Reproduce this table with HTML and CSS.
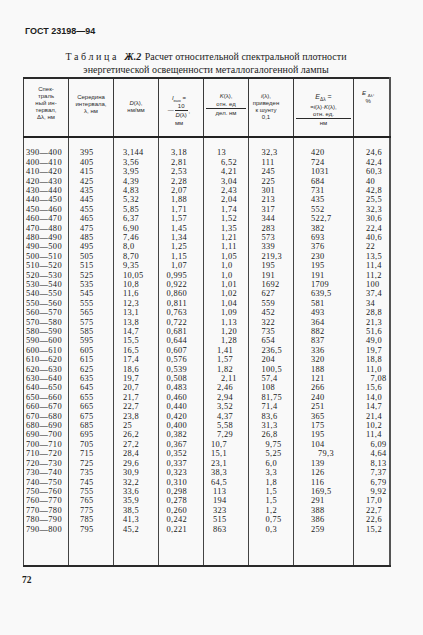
FILE: index.html
```html
<!DOCTYPE html>
<html lang="ru">
<head>
<meta charset="utf-8">
<title>ГОСТ 23198—94, таблица Ж.2</title>
<link rel="stylesheet" href="styles.css">
</head>
<body>
<div class="page">
  <div class="gost">ГОСТ 23198—94</div>
  <div class="title">
    <div><span class="sp">Таблица</span> <b class="num">Ж.2</b> Расчет относительной спектральной плотности</div>
    <div>энергетической освещенности металлогалогенной лампы</div>
  </div>
  <table class="tb">
    <colgroup>
      <col class="w45"><col class="w45"><col class="w45"><col class="w45"><col class="w45"><col class="w45"><col class="w60"><col class="w36">
    </colgroup>
    <thead>
      <tr>
        <th><div class="h h1"><div>Спек-</div><div>траль</div><div>ный ин-</div><div>тервал,</div><div>Δλ, нм</div></div></th>
        <th><div class="h h2"><div>Середина</div><div>интервала,</div><div>λ, нм</div></div></th>
        <th><div class="h h3"><div><i>D</i>(λ),</div><div>нм/мм</div></div></th>
        <th><div class="h h4">
          <div class="l8"><i>I</i><sub>вых</sub> =</div>
          <div class="fr-row"><span class="dash">—</span><span class="frac"><span class="fn">10</span><span class="fd"><i>D</i>(λ)</span></span><span class="cm">,</span></div>
          <div class="l8">мм</div>
        </div></th>
        <th><div class="h h5">
          <div class="l8"><i>K</i>(λ),</div>
          <div class="frac wide"><span class="fn">отн. ед</span><span class="fd">дел. нм</span></div>
        </div></th>
        <th><div class="h h6"><div><i>i</i>(λ),</div><div>приведен</div><div>к шунту</div><div>0,1</div></div></th>
        <th><div class="h h7">
          <div class="e1"><i>E</i><sub>Δλ</sub> =</div>
          <div class="l8">=<i>i</i>(λ)·<i>K</i>(λ),</div>
          <div class="frac wide"><span class="fn">отн. ед.</span><span class="fd">нм</span></div>
        </div></th>
        <th><div class="h h8"><div class="l8"><i>E</i> <sub>Δλ</sub>,</div><div class="l8">%</div></div></th>
      </tr>
    </thead>
    <tbody>
      <tr class="gap"><td></td><td></td><td></td><td></td><td></td><td></td><td></td><td></td></tr>
      <tr><td>390—400</td><td>395</td><td>3,144</td><td>3,18</td><td class="t5a">13</td><td>32,3</td><td>420</td><td>24,6</td></tr>
      <tr><td>400—410</td><td>405</td><td>3,56</td><td>2,81</td><td>6,52</td><td>111</td><td>724</td><td>42,4</td></tr>
      <tr><td>410—420</td><td>415</td><td>3,95</td><td>2,53</td><td>4,21</td><td>245</td><td>1031</td><td>60,3</td></tr>
      <tr><td>420—430</td><td>425</td><td>4,39</td><td>2,28</td><td>3,04</td><td>225</td><td>684</td><td>40</td></tr>
      <tr><td>430—440</td><td>435</td><td>4,83</td><td>2,07</td><td>2,43</td><td>301</td><td>731</td><td>42,8</td></tr>
      <tr><td>440—450</td><td>445</td><td>5,32</td><td>1,88</td><td>2,04</td><td>213</td><td>435</td><td>25,5</td></tr>
      <tr><td>450—460</td><td>455</td><td>5,85</td><td>1,71</td><td>1,74</td><td>317</td><td>552</td><td>32,3</td></tr>
      <tr><td>460—470</td><td>465</td><td>6,37</td><td>1,57</td><td>1,52</td><td>344</td><td>522,7</td><td>30,6</td></tr>
      <tr><td>470—480</td><td>475</td><td>6,90</td><td>1,45</td><td>1,35</td><td>283</td><td>382</td><td>22,4</td></tr>
      <tr><td>480—490</td><td>485</td><td>7,46</td><td>1,34</td><td>1,21</td><td>573</td><td>693</td><td>40,6</td></tr>
      <tr><td>490—500</td><td>495</td><td>8,0</td><td>1,25</td><td>1,11</td><td>339</td><td>376</td><td>22</td></tr>
      <tr><td>500—510</td><td>505</td><td>8,70</td><td>1,15</td><td>1,05</td><td>219,3</td><td>230</td><td>13,5</td></tr>
      <tr><td>510—520</td><td>515</td><td>9,35</td><td>1,07</td><td>1,0</td><td>195</td><td>195</td><td>11,4</td></tr>
      <tr><td>520—530</td><td>525</td><td>10,05</td><td>0,995</td><td>1,0</td><td>191</td><td>191</td><td>11,2</td></tr>
      <tr><td>530—540</td><td>535</td><td>10,8</td><td>0,922</td><td>1,01</td><td>1692</td><td>1709</td><td>100</td></tr>
      <tr><td>540—550</td><td>545</td><td>11,6</td><td>0,860</td><td>1,02</td><td>627</td><td>639,5</td><td>37,4</td></tr>
      <tr><td>550—560</td><td>555</td><td>12,3</td><td>0,811</td><td>1,04</td><td>559</td><td>581</td><td>34</td></tr>
      <tr><td>560—570</td><td>565</td><td>13,1</td><td>0,763</td><td>1,09</td><td>452</td><td>493</td><td>28,8</td></tr>
      <tr><td>570—580</td><td>575</td><td>13,8</td><td>0,722</td><td>1,13</td><td>322</td><td>364</td><td>21,3</td></tr>
      <tr><td>580—590</td><td>585</td><td>14,7</td><td>0,681</td><td>1,20</td><td>735</td><td>882</td><td>51,6</td></tr>
      <tr><td>590—600</td><td>595</td><td>15,5</td><td>0,644</td><td>1,28</td><td>654</td><td>837</td><td>49,0</td></tr>
      <tr><td>600—610</td><td>605</td><td>16,5</td><td>0,607</td><td class="t5a">1,41</td><td>236,5</td><td>336</td><td>19,7</td></tr>
      <tr><td>610—620</td><td>615</td><td>17,4</td><td>0,576</td><td class="t5a">1,57</td><td>204</td><td>320</td><td>18,8</td></tr>
      <tr><td>620—630</td><td>625</td><td>18,6</td><td>0,539</td><td class="t5a">1,82</td><td>100,5</td><td>188</td><td>11,0</td></tr>
      <tr><td>630—640</td><td>635</td><td>19,7</td><td>0,508</td><td>2,11</td><td>57,4</td><td>121</td><td class="t8r">7,08</td></tr>
      <tr><td>640—650</td><td>645</td><td>20,7</td><td>0,483</td><td class="t5a">2,46</td><td>108</td><td>266</td><td>15,6</td></tr>
      <tr><td>650—660</td><td>655</td><td>21,7</td><td>0,460</td><td class="t5a">2,94</td><td>81,75</td><td>240</td><td>14,0</td></tr>
      <tr><td>660—670</td><td>665</td><td>22,7</td><td>0,440</td><td class="t5a">3,52</td><td>71,4</td><td>251</td><td>14,7</td></tr>
      <tr><td>670—680</td><td>675</td><td>23,8</td><td>0,420</td><td class="t5a">4,37</td><td>83,6</td><td>365</td><td>21,4</td></tr>
      <tr><td>680—690</td><td>685</td><td>25</td><td>0,400</td><td class="t5a">5,58</td><td>31,3</td><td>175</td><td>10,2</td></tr>
      <tr><td>690—700</td><td>695</td><td>26,2</td><td>0,382</td><td class="t5a">7,29</td><td>26,8</td><td>195</td><td>11,4</td></tr>
      <tr><td>700—710</td><td>705</td><td>27,2</td><td>0,367</td><td class="t5b">10,7</td><td class="t6a">9,75</td><td>104</td><td class="t8r">6,09</td></tr>
      <tr><td>710—720</td><td>715</td><td>28,4</td><td>0,352</td><td class="t5b">15,1</td><td class="t6a">5,25</td><td class="t7a">79,3</td><td class="t8r">4,64</td></tr>
      <tr><td>720—730</td><td>725</td><td>29,6</td><td>0,337</td><td class="t5b">23,1</td><td class="t6a">6,0</td><td>139</td><td class="t8r">8,13</td></tr>
      <tr><td>730—740</td><td>735</td><td>30,9</td><td>0,323</td><td class="t5b">38,3</td><td class="t6a">3,3</td><td>126</td><td class="t8r">7,37</td></tr>
      <tr><td>740—750</td><td>745</td><td>32,2</td><td>0,310</td><td class="t5b">64,5</td><td class="t6a">1,8</td><td>116</td><td class="t8r">6,79</td></tr>
      <tr><td>750—760</td><td>755</td><td>33,6</td><td>0,298</td><td class="t5c">113</td><td class="t6a">1,5</td><td>169,5</td><td class="t8r">9,92</td></tr>
      <tr><td>760—770</td><td>765</td><td>35,9</td><td>0,278</td><td class="t5c">194</td><td class="t6a">1,5</td><td>291</td><td>17,0</td></tr>
      <tr><td>770—780</td><td>775</td><td>38,5</td><td>0,260</td><td class="t5c">323</td><td class="t6a">1,2</td><td>388</td><td>22,7</td></tr>
      <tr><td>780—790</td><td>785</td><td>41,3</td><td>0,242</td><td class="t5c">515</td><td class="t6a">0,75</td><td>386</td><td>22,6</td></tr>
      <tr><td>790—800</td><td>795</td><td>45,2</td><td>0,221</td><td class="t5c">863</td><td class="t6a">0,3</td><td>259</td><td>15,2</td></tr>
      <tr class="tail"><td></td><td></td><td></td><td></td><td></td><td></td><td></td><td></td></tr>
    </tbody>
  </table>
  <div class="folio">72</div>
</div>
</body>
</html>
```

FILE: styles.css
```css
html, body {
  margin: 0;
  padding: 0;
  background: #f9f9f9;
}
body {
  width: 423px;
  height: 635px;
  overflow: hidden;
  font-family: "Liberation Serif", "DejaVu Serif", serif;
  color: #1c1c1c;
}
.page {
  padding-top: 26px;
}
.gost {
  margin-left: 25px;
  font-family: "Liberation Sans", Arial, sans-serif;
  font-weight: bold;
  font-size: 9px;
  line-height: 11px;
}
.title {
  width: 366px;
  margin: 13px 0 0 23px;
  text-align: center;
  font-size: 10px;
  line-height: 13px;
}
.title .sp {
  letter-spacing: 2.6px;
  margin-right: 3px;
}
.title .num {
  font-weight: bold;
  font-style: italic;
  margin-right: 1px;
}
.tb {
  margin: 0.5px 0 0 23px;
  width: 366px;
  table-layout: fixed;
  border-collapse: collapse;
  border-top: 2px solid #2a2a2a;
  border-bottom: 2px solid #2a2a2a;
  border-left: 1.5px solid #333;
  border-right: 2px solid #555;
  font-family: "Liberation Serif", serif;
}
.w45 { width: 45px; }
.w60 { width: 60px; }
.w36 { width: 36px; }

.tb th {
  padding: 0;
  vertical-align: top;
  border-left: 1px solid #3a3a3a;
  border-right: 1px solid #3a3a3a;
  border-bottom: 2px solid #222;
  font-family: "Liberation Sans", Arial, sans-serif;
  font-weight: normal;
  font-size: 6px;
  line-height: 7px;
  color: #2a2a2a;
  text-align: center;
}
.h {
  height: 57.5px;
  box-sizing: border-box;
}
.h1 { padding-top: 7.5px; }
.h2 { padding-top: 15.5px; }
.h3 { padding-top: 21.5px; }
.h4 { padding-top: 15px; padding-right: 4px; }
.h5 { padding-top: 13px; }
.h6 { padding-top: 14px; padding-right: 10px; }
.h7 { padding-top: 11.5px; }
.h8 { padding-top: 10px; padding-right: 6px; }
.l8 { line-height: 8px; }
.e1 { line-height: 13px; font-size: 7px; }
.tb sub {
  font-size: 70%;
  line-height: 0;
  vertical-align: -1.5px;
}
.fr-row {
  display: flex;
  justify-content: center;
  align-items: center;
}
.dash {
  margin-right: 1px;
  margin-top: 1px;
}
.frac {
  display: inline-flex;
  flex-direction: column;
  align-items: center;
}
.fn {
  display: block;
  line-height: 8px;
  padding: 0 3px;
  border-bottom: 1px solid #2a2a2a;
}
.fd {
  display: block;
  line-height: 8px;
}
.cm {
  margin-left: 1px;
  margin-top: 3px;
}
.frac.wide {
  display: flex;
  align-items: stretch;
  margin: 0 2px;
}
.h7 .frac.wide .fn {
  line-height: 7px;
}

.tb td {
  padding: 0;
  height: 9.4px;
  line-height: 9.4px;
  font-size: 8.4px;
  letter-spacing: 0.35px;
  white-space: nowrap;
  border-left: 1px solid #444;
  border-right: 1px solid #444;
  text-align: left;
  color: #1a1a1a;
}
.tb tr.gap td { height: 10.3px; }
.tb tr.tail td { height: 31px; }

.tb td:nth-child(1) { padding-left: 2px; }
.tb td:nth-child(2) { padding-left: 11px; }
.tb td:nth-child(3) { padding-left: 9px; }
.tb td:nth-child(4) { text-align: right; padding-right: 16px; }
.tb td:nth-child(5) { padding-left: 17px; }
.tb td:nth-child(6) { padding-left: 12.5px; }
.tb td:nth-child(7) { padding-left: 17px; }
.tb td:nth-child(8) { padding-left: 12px; }

.tb td.t5a { padding-left: 13px; }
.tb td.t5b { padding-left: 7px; }
.tb td.t5c { padding-left: 9px; }
.tb td.t6a { padding-left: 16.5px; }
.tb td.t7a { padding-left: 24px; }
.tb td.t8r { text-align: right; padding-left: 0; padding-right: 2px; }

.folio {
  margin: 8.5px 0 0 22px;
  font-size: 9.5px;
  line-height: 11px;
  font-weight: bold;
}
```
